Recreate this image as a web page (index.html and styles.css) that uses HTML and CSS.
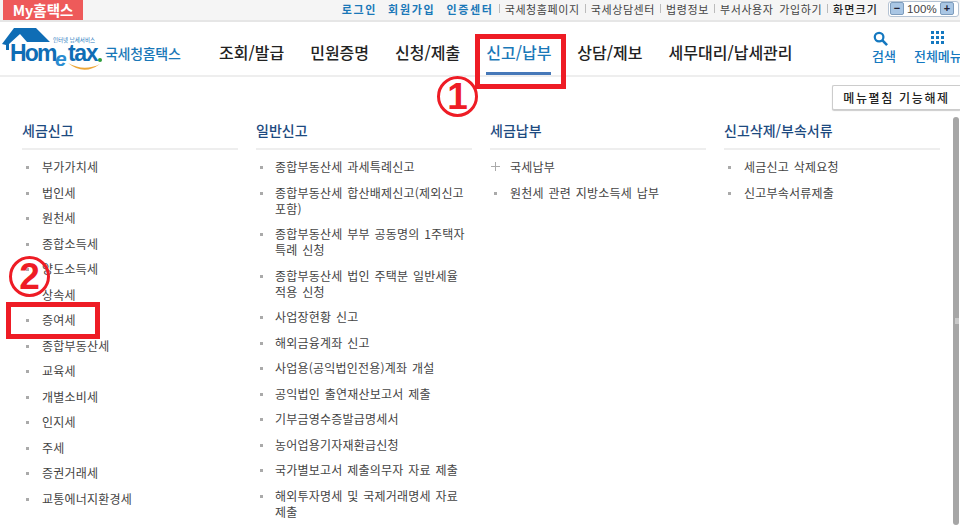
FILE: index.html
```html
<!DOCTYPE html>
<html lang="ko">
<head>
<meta charset="utf-8">
<title>홈택스</title>
<link rel="stylesheet" href="styles.css">
</head>
<body>
<div class="page">
  <header class="topbar">
    <a class="mytab">My홈택스</a>
    <nav class="util">
      <a class="u-strong u1">로그인</a>
      <a class="u-strong u1">회원가입</a>
      <a class="u-strong u2">인증센터</a>
      <i class="sep"></i><a class="u-link">국세청홈페이지</a>
      <i class="sep"></i><a class="u-link">국세상담센터</a>
      <i class="sep"></i><a class="u-link">법령정보</a>
      <i class="sep"></i><a class="u-link">부서사용자 가입하기</a>
      <i class="sep"></i><span class="u-size">화면크기</span>
      <span class="zoomctl"><b class="zbtn">−</b><span class="zval">100%</span><b class="zbtn">+</b></span>
    </nav>
  </header>
  <div class="mainnav">
    <a class="logo">
      <svg width="182" height="52" viewBox="0 0 182 52">
        <path d="M2 18 L14 2 H36 L50 16 H27 L20 8 L9 18 L9 24 L6 24 L6 19 Z" fill="#0f6db5"/>
        <text x="53" y="16" class="l-small">인터넷 납세서비스</text>
        <text x="10" y="35" class="l-main">Hom</text>
        <text x="55" y="40" class="l-e">e</text>
        <text x="68" y="35" class="l-tax">tax</text>
        <circle cx="100" cy="34" r="2" fill="#2e9e3c"/>
        <path d="M68 37 Q84 50 100 38 Q84 46 68 37 Z" fill="#eda636"/>
        <text x="105" y="33" class="l-kr">국세청홈택스</text>
      </svg>
    </a>
    <nav class="gnb">
      <a class="gnb-item">조회/발급</a>
      <a class="gnb-item">민원증명</a>
      <a class="gnb-item">신청/제출</a>
      <a class="gnb-item active">신고/납부</a>
      <a class="gnb-item">상담/제보</a>
      <a class="gnb-item">세무대리/납세관리</a>
    </nav>
    <div class="tools">
      <a class="tool t-search">
        <svg width="15" height="15" viewBox="0 0 16 16"><circle cx="6.5" cy="6.5" r="4.6" fill="none" stroke="#1478c0" stroke-width="2.4"/><path d="M9.8 9.8 L15 15" stroke="#1478c0" stroke-width="2.8"/></svg>
        <span>검색</span>
      </a>
      <a class="tool t-all">
        <svg width="13" height="13" viewBox="0 0 13 13" fill="#1478c0"><rect x="0" y="0" width="3" height="3"/><rect x="5" y="0" width="3" height="3"/><rect x="10" y="0" width="3" height="3"/><rect x="0" y="5" width="3" height="3"/><rect x="5" y="5" width="3" height="3"/><rect x="10" y="5" width="3" height="3"/><rect x="0" y="10" width="3" height="3"/><rect x="5" y="10" width="3" height="3"/><rect x="10" y="10" width="3" height="3"/></svg>
        <span>전체메뉴</span>
      </a>
    </div>
  </div>
  <div class="btnrow"><button class="foldbtn">메뉴펼침 기능해제</button></div>
  <main class="cols">
    <section class="col">
      <h2>세금신고</h2>
      <ul>
        <li>부가가치세</li><li>법인세</li><li>원천세</li><li>종합소득세</li><li>양도소득세</li><li>상속세</li><li>증여세</li><li>종합부동산세</li><li>교육세</li><li>개별소비세</li><li>인지세</li><li>주세</li><li>증권거래세</li><li>교통에너지환경세</li>
      </ul>
    </section>
    <section class="col">
      <h2>일반신고</h2>
      <ul>
        <li>종합부동산세 과세특례신고</li>
        <li>종합부동산세 합산배제신고(제외신고<br>포함)</li>
        <li>종합부동산세 부부 공동명의 1주택자<br>특례 신청</li>
        <li>종합부동산세 법인 주택분 일반세율<br>적용 신청</li>
        <li>사업장현황 신고</li>
        <li>해외금융계좌 신고</li>
        <li>사업용(공익법인전용)계좌 개설</li>
        <li>공익법인 출연재산보고서 제출</li>
        <li>기부금영수증발급명세서</li>
        <li>농어업용기자재환급신청</li>
        <li>국가별보고서 제출의무자 자료 제출</li>
        <li>해외투자명세 및 국제거래명세 자료<br>제출</li>
      </ul>
    </section>
    <section class="col">
      <h2>세금납부</h2>
      <ul>
        <li class="plus">국세납부</li>
        <li>원천세 관련 지방소득세 납부</li>
      </ul>
    </section>
    <section class="col">
      <h2>신고삭제/부속서류</h2>
      <ul>
        <li>세금신고 삭제요청</li>
        <li>신고부속서류제출</li>
      </ul>
    </section>
  </main>
  <div class="scrollbar"><i></i></div>
  <div class="mark box1"></div>
  <div class="mark box2"></div>
  <div class="mark num n1">1</div>
  <div class="mark num n2">2</div>
</div>
</body>
</html>
```
FILE: styles.css
```css
* { box-sizing: border-box; }
html, body { margin: 0; padding: 0; background: #fff; overflow: hidden; }
a { color: inherit; text-decoration: none; }
.page {
  position: relative;
  width: 960px;
  height: 529px;
  overflow: hidden;
  font-family: "Noto Sans CJK KR", "Noto Sans", sans-serif;
  color: #444;
}
.topbar {
  height: 22px;
  background: #f5f5f5;
  border-bottom: 2px solid #e6e6e6;
  display: flex;
  justify-content: space-between;
}
.mytab {
  margin-left: 3px;
  width: 80px;
  height: 20px;
  background: #ee5a5a;
  color: #fff;
  font: 700 14.5px/20px "Noto Sans CJK KR", sans-serif;
  text-align: center;
}
.util {
  display: flex;
  align-items: center;
  height: 17px;
  font-size: 11px;
  padding-right: 1px;
}
.util a, .util span { white-space: nowrap; line-height: 18px; }
.u-strong { color: #1a78b8; font-weight: 700; letter-spacing: 1.7px; }
.u1 { margin-right: 11px; }
.u2 { margin-right: 5px; }
.sep { width: 1px; height: 9px; background: #bbb; margin-right: 5px; }
.u-link { color: #444; letter-spacing: .6px; word-spacing: 2px; margin-right: 5px; }
.u-size { color: #222; letter-spacing: 1.1px; font-weight: 500; margin-right: 10px; }
.zoomctl {
  display: flex;
  align-items: center;
  justify-content: space-between;
  width: 71px;
  height: 16px;
  border: 1px solid #b5c3d3;
  border-radius: 3px;
  background: #fff;
  padding: 0 4px 0 1px;
}
.zbtn {
  width: 14px;
  height: 13px;
  background: #a9c6e4;
  border: 1px solid #7d9cbc;
  border-radius: 2px;
  color: #223;
  font: 700 11px/11px "Liberation Sans", sans-serif;
  text-align: center;
}
.zoomctl .zval { font: 11.5px/14px "Liberation Sans", sans-serif; color: #444; letter-spacing: .1px; }
.mainnav {
  height: 55px;
  border-bottom: 2px solid #eee;
  display: flex;
  background: #fff;
}
.logo { width: 219px; flex: none; padding-top: 4px; height: 53px; }
.logo svg { display: block; }
.l-small { font: 5.5px "Noto Sans CJK KR", sans-serif; fill: #2a7cc0; }
.l-main { font: 700 23px "Liberation Sans", sans-serif; fill: #0f6db5; letter-spacing: -1.8px; }
.l-tax { font: 700 23px "Liberation Sans", sans-serif; fill: #0f6db5; letter-spacing: -1.4px; }
.l-e { font: italic 700 21px "Liberation Sans", sans-serif; fill: #2a8cd0; }
.l-kr { font: 500 14px "Noto Sans CJK KR", sans-serif; fill: #1a78b8; letter-spacing: -.3px; }
.gnb { display: flex; gap: 26px; width: 601px; flex: none; }
.gnb-item {
  height: 53px;
  padding-top: 18px;
  font-size: 16px;
  line-height: 24px;
  font-weight: 500;
  color: #222;
  white-space: nowrap;
}
.gnb-item.active { color: #1a78b8; border-bottom: 3px solid #4678b8; }
.tools { display: flex; flex: none; padding-left: 52px; gap: 18px; }
.tool {
  display: flex;
  flex-direction: column;
  align-items: center;
  padding-top: 9px;
  color: #1478c0;
  font-size: 13px;
  font-weight: 500;
  white-space: nowrap;
  line-height: 16px;
}
.tool svg { display: block; margin-bottom: 2px; }
.t-search svg { align-self: flex-start; margin-left: 1px; }
.t-all svg { margin-bottom: 4px; }
.btnrow { display: flex; justify-content: flex-end; padding-top: 8px; height: 42px; }
.foldbtn {
  width: 128px;
  height: 25px;
  background: #fff;
  border: 1px solid #ccc;
  border-right: 0;
  border-radius: 2px 0 0 2px;
  box-shadow: 0 1px 1px #ccc;
  font: 500 12px/20px "Noto Sans CJK KR", sans-serif;
  color: #222;
  letter-spacing: 1.65px;
  padding: 0;
}
.cols {
  display: grid;
  grid-template-columns: repeat(4, 216px);
  column-gap: 18px;
  padding-left: 22px;
}
.col h2 {
  margin: 0 0 9px;
  height: 31px;
  padding-top: 0;
  font-size: 14px;
  line-height: 22px;
  font-weight: 500;
  color: #1d4a80;
  border-bottom: 2px solid #eee;
}
.col ul { list-style: none; margin: 0; padding: 0; }
.col li {
  position: relative;
  padding-left: 20px;
  margin-bottom: 9.5px;
  font-size: 12px;
  line-height: 16px;
  color: #444;
  letter-spacing: .2px;
  word-spacing: 1.2px;
  white-space: nowrap;
}
.col:nth-child(2) li { padding-left: 19px; }
.col li::before {
  content: "";
  position: absolute;
  left: 4px;
  top: 7px;
  width: 3px;
  height: 3px;
  background: #aaa;
}
.col li.plus::before {
  left: 1px;
  top: 3px;
  width: 9px;
  height: 9px;
  background:
    linear-gradient(#aaa, #aaa) center / 1px 100% no-repeat,
    linear-gradient(#aaa, #aaa) center / 100% 1px no-repeat;
}
.scrollbar {
  position: absolute;
  left: 953px;
  top: 117px;
  width: 6px;
  height: 408px;
  background: #a6a6a6;
  border-radius: 3px;
}
.scrollbar i {
  position: absolute;
  left: 2px;
  top: 201px;
  width: 4px;
  height: 6px;
  background: #c8c8c8;
}
.mark { position: absolute; }
.box1 { left: 475px; top: 34px; width: 91px; height: 55px; border: 5px solid #ee1c25; }
.box2 { left: 6px; top: 302px; width: 94px; height: 37px; border: 5px solid #ee1c25; }
.num {
  width: 41px;
  height: 41px;
  border: 3px solid #ee1c25;
  border-radius: 50%;
  background: #fff;
  color: #ee1c25;
  font: 700 37px/35px "Liberation Sans", sans-serif;
  text-align: center;
}
.n1 { left: 437px; top: 76px; }
.n2 { left: 9px; top: 256px; background: transparent; }
```
